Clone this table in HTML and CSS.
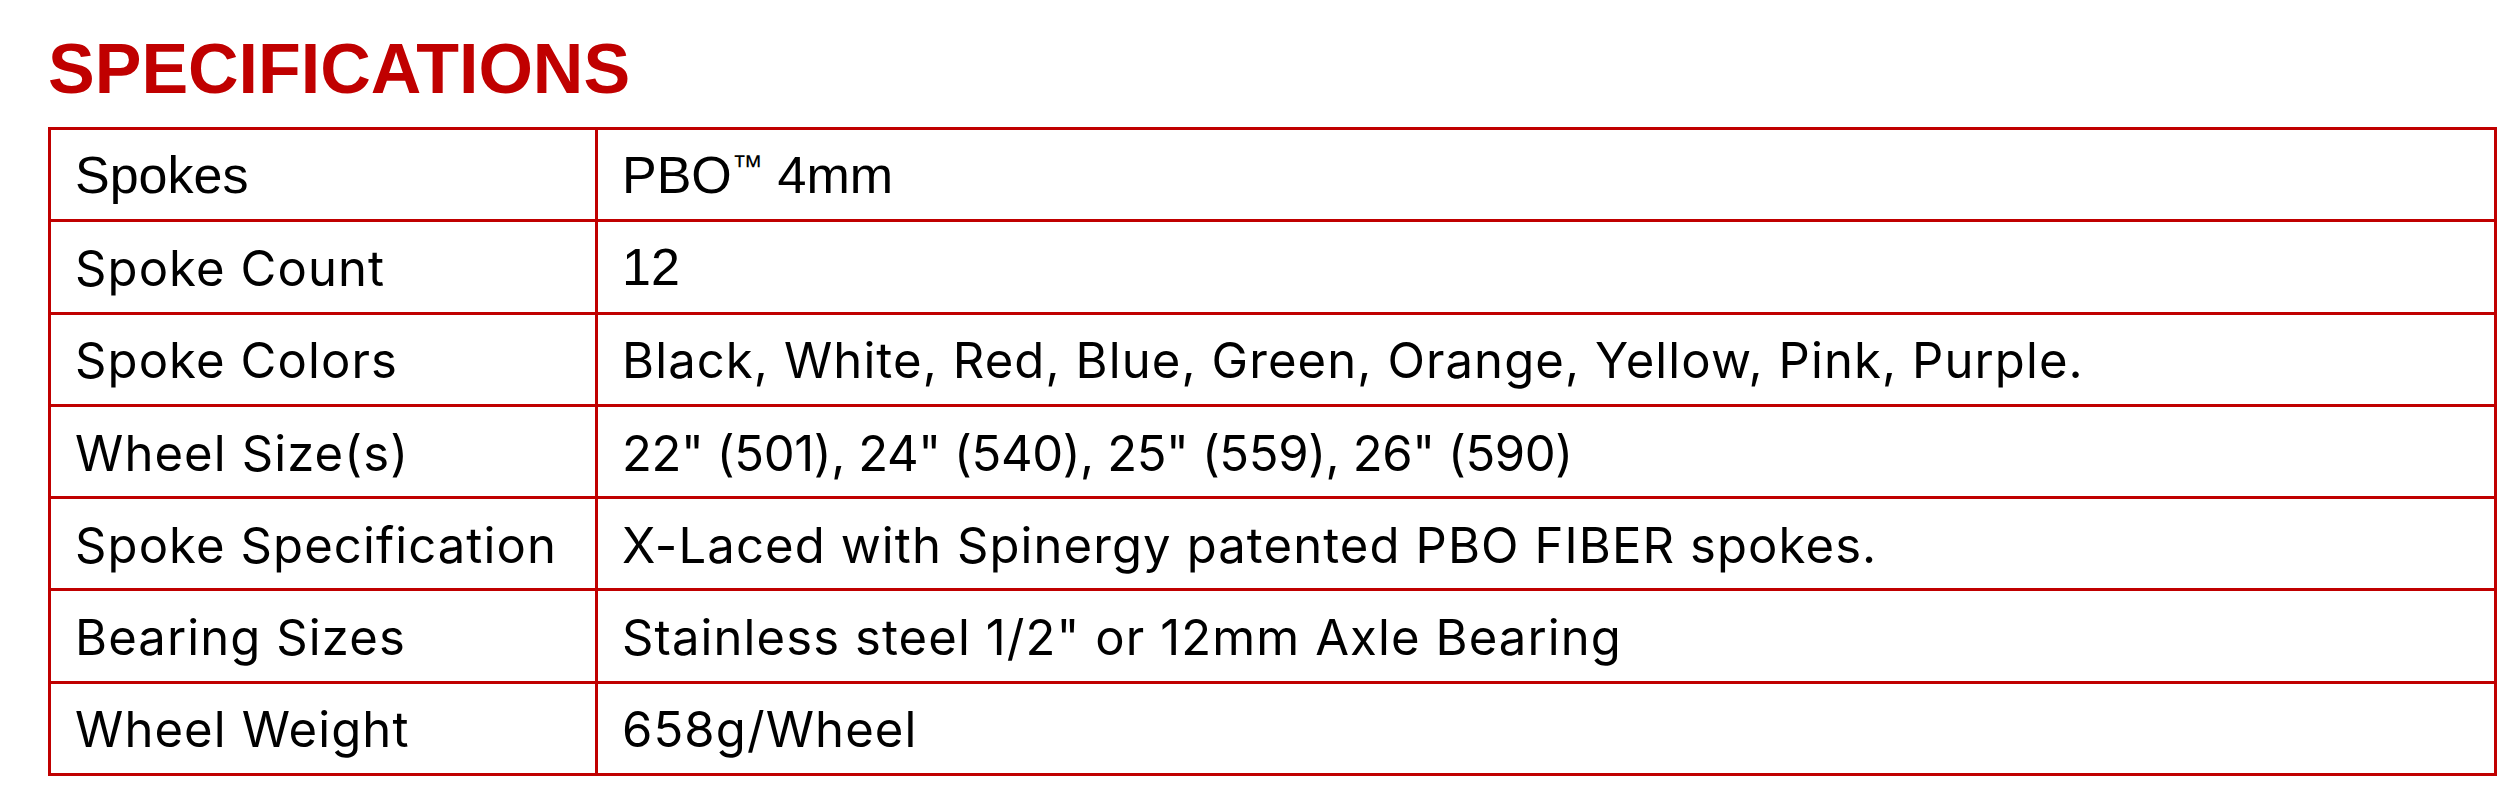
FILE: index.html
```html
<!DOCTYPE html>
<html lang="en">
<head>
<meta charset="utf-8">
<title>Specifications</title>
<link rel="stylesheet" href="styles.css">
</head>
<body>
<main class="page">
  <h1 class="title">SPECIFICATIONS</h1>
  <table class="specs">
    <tbody>
      <tr>
        <td class="label">Spokes</td>
        <td class="value">PBO<span class="tm">™</span> 4mm</td>
      </tr>
      <tr>
        <td class="label soft">Spoke Count</td>
        <td class="value">12</td>
      </tr>
      <tr>
        <td class="label soft">Spoke Colors</td>
        <td class="value soft">Black, White, Red, Blue, Green, Orange, Yellow, Pink, Purple.</td>
      </tr>
      <tr>
        <td class="label soft">Wheel Size(s)</td>
        <td class="value soft digits">22" (501), 24" (540), 25" (559), 26" (590)</td>
      </tr>
      <tr>
        <td class="label soft">Spoke Specification</td>
        <td class="value soft">X-Laced with Spinergy patented PBO FIBER spokes.</td>
      </tr>
      <tr>
        <td class="label soft">Bearing Sizes</td>
        <td class="value soft">Stainless steel 1/2" or 12mm Axle Bearing</td>
      </tr>
      <tr>
        <td class="label soft">Wheel Weight</td>
        <td class="value soft">658g/Wheel</td>
      </tr>
    </tbody>
  </table>
</main>
</body>
</html>
```

FILE: styles.css
```css
html, body {
  margin: 0;
  padding: 0;
  background: #ffffff;
}

.page {
  padding: 34px 3px 0 48px;
  font-family: "Liberation Sans", Arial, sans-serif;
  color: #000000;
}

.title {
  margin: 0 0 23px 0;
  font-family: "Liberation Sans", Arial, sans-serif;
  font-weight: 700;
  font-size: 70px;
  line-height: 70px;
  color: #c00000;
}

.specs {
  width: 100%;
  border-collapse: collapse;
  border: 3px solid #c00000;
}

.specs td {
  border: 3px solid #c00000;
  height: 89.3px;
  padding: 0;
  vertical-align: middle;
  font-size: 52px;
  line-height: 56px;
  white-space: nowrap;
}

.label {
  width: 520px;
  padding-left: 24px !important;
}

.value {
  padding-left: 24px !important;
}

.tm {
  font-size: 0.6em;
  vertical-align: 0.5em;
  line-height: 0;
}

.specs td.soft {
  font-family: Inter, "Liberation Sans", sans-serif;
  font-size: 49px;
  letter-spacing: 1.1px;
  height: 85.3px;
  padding-top: 4px;
}

.specs td.digits {
  letter-spacing: -0.4px;
}
```
